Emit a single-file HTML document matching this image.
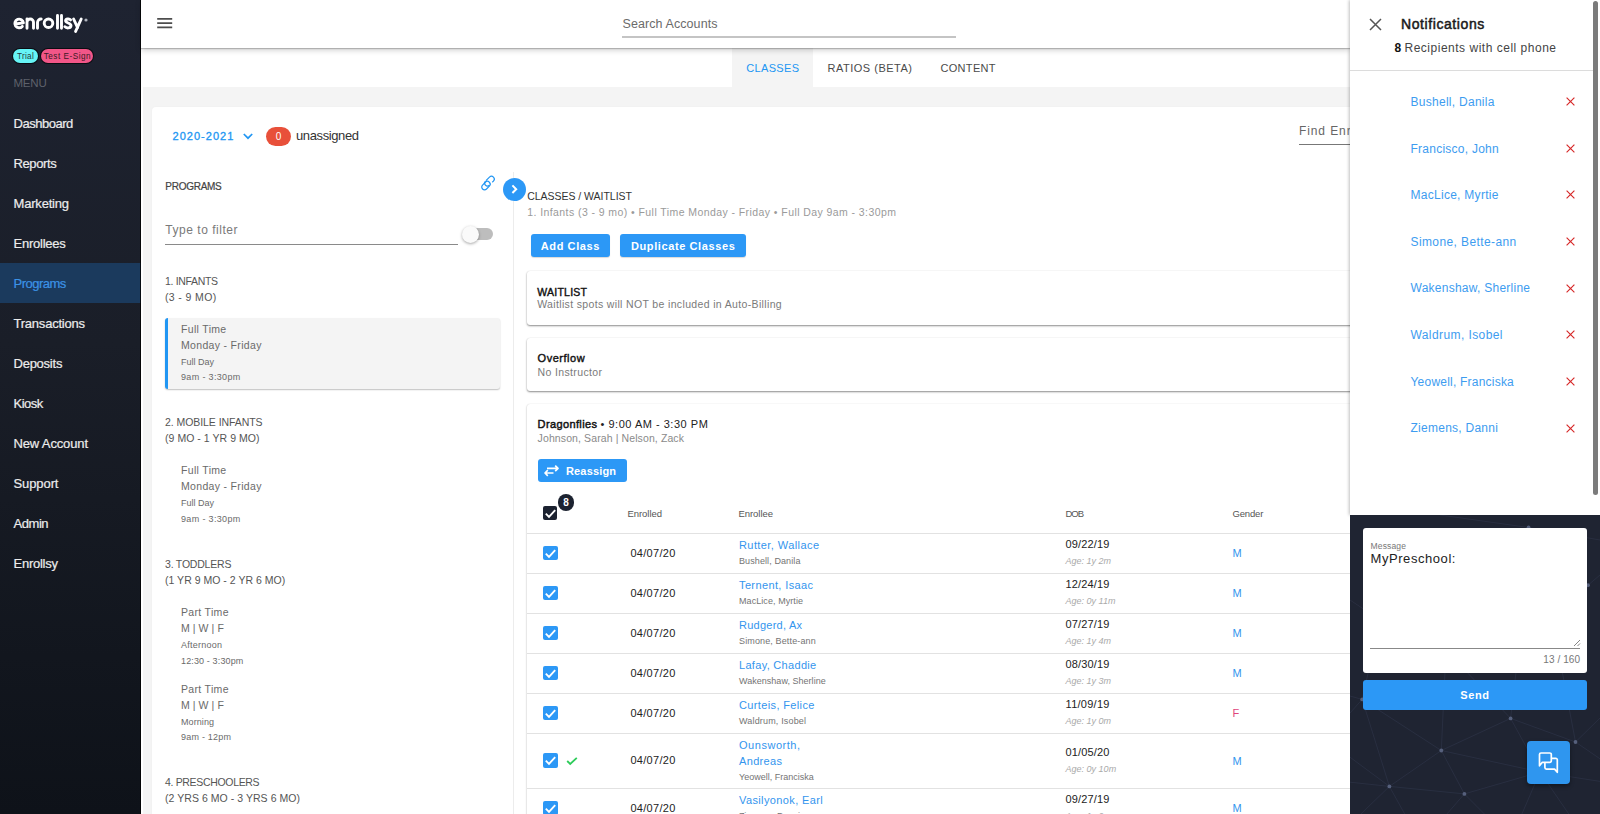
<!DOCTYPE html>
<html><head><meta charset="utf-8"><style>
*{box-sizing:border-box}
html,body{margin:0;padding:0}
body{width:1600px;height:814px;overflow:hidden;position:relative;background:#fff;font-family:"Liberation Sans", sans-serif;}
.t{position:absolute;white-space:nowrap;}
.a{position:absolute;}
</style></head><body>
<!-- sidebar -->
<div class="a" style="left:0;top:0;width:141px;height:814px;background:linear-gradient(180deg,#1e2331 0%,#1a1e28 42%,#0e1219 100%);"></div>
<div class="a" style="left:0;top:263px;width:141px;height:40px;background:#1b3a5d;"></div>
<!-- logo -->
<svg class="a" style="left:0;top:0" width="100" height="40" viewBox="0 0 100 40">
<g fill="none" stroke="#fff" stroke-width="2.9" stroke-linecap="round" stroke-linejoin="round">
<path d="M15.2 24.0 L23.4 22.9 A4.3 4.3 0 1 0 22.3 26.4"/>
<path d="M27 28.2 V22.3 A3.25 3.25 0 0 1 33.5 22.3 V28.2"/>
<path d="M27 18.9 V20" />
<path d="M37.5 28.2 V22.6 A3.6 3.6 0 0 1 41.2 19"/>
<circle cx="48.5" cy="23.25" r="4.3"/>
<path d="M57.5 15.4 V28.2 M61.5 15.4 V28.2"/>
<path d="M70.6 19.9 C69.6 18.6 65.6 18.4 65.6 20.8 C65.6 23.4 71 22.6 71 25.6 C71 28.6 66.2 28.4 64.9 26.7"/>
<path d="M73.6 19 L77.6 27.6 M81.2 19 L75.6 31.4"/>
</g>
<circle cx="86" cy="20" r="1.6" fill="#b0b4bd"/>
</svg>
<div class="a" style="left:13px;top:49px;width:24.5px;height:14px;border-radius:7px;background:#66f4f6;box-shadow:0 0 0 1px #0a0d12;"></div>
<div class="a" style="left:41.4px;top:49px;width:51.6px;height:14px;border-radius:7px;background:#f25688;box-shadow:0 0 0 1px #0a0d12;"></div>
<div class="t" style="left:13.3px;width:24.5px;text-align:center;top:50.8px;font-size:8.2px;line-height:11px;color:#26393d;letter-spacing:0.25px">Trial</div>
<div class="t" style="left:41.6px;width:51.6px;text-align:center;top:50.8px;font-size:8.2px;line-height:11px;color:#3b1a26;letter-spacing:0.5px">Test E-Sign</div>

<!-- content bg -->
<div class="a" style="left:143px;top:87px;width:1207px;height:727px;background:#f4f4f4;"></div>
<!-- tab bar -->
<div class="a" style="left:732px;top:48px;width:81px;height:39px;background:#f4f4f4;"></div>
<!-- header -->
<div class="a" style="left:141px;top:0;width:1209px;height:48px;background:#fff;box-shadow:0 1px 1px rgba(0,0,0,0.2),0 2px 6px rgba(0,0,0,0.2);"></div>
<div class="a" style="left:140px;top:0;width:1.2px;height:814px;background:rgba(0,0,0,0.8);"></div>
<svg class="a" style="left:155px;top:15px" width="20" height="16" viewBox="0 0 20 16"><path d="M2.2 3.9 H17.2 M2.2 8.1 H17.2 M2.2 12.4 H17.2" stroke="#4d4d4d" stroke-width="1.7"/></svg>
<div class="a" style="left:622px;top:36px;width:334px;height:1.5px;background:#c4c4c4;"></div>

<!-- main card -->
<div class="a" style="left:152px;top:107px;width:1250px;height:760px;background:#fff;border-radius:4px;box-shadow:0 0 2px rgba(0,0,0,0.04);"></div>
<!-- unassigned badge -->
<div class="a" style="left:265.7px;top:127px;width:25.8px;height:19.4px;border-radius:10px;background:#e8503a;"></div>
<!-- chevron -->
<svg class="a" style="left:242px;top:132px" width="12" height="9" viewBox="0 0 12 9"><path d="M1.8 2 L6 6.2 L10.2 2" stroke="#2196f3" stroke-width="1.7" fill="none"/></svg>
<!-- find enrollee underline -->
<div class="a" style="left:1299px;top:143.5px;width:60px;height:1px;background:#777;"></div>
<!-- filter underline -->
<div class="a" style="left:165px;top:244px;width:293px;height:1px;background:#8a8a8a;"></div>
<!-- toggle -->
<div class="a" style="left:464px;top:228px;width:29px;height:12px;border-radius:6px;background:#bdbdbd;"></div>
<div class="a" style="left:461.5px;top:225.7px;width:17px;height:17px;border-radius:50%;background:#fafafa;box-shadow:0 1px 3px rgba(0,0,0,0.35);"></div>
<!-- link icon -->
<svg class="a" style="left:478.7px;top:174.4px" width="18" height="18" viewBox="0 0 18 18">
<g transform="rotate(-45 9 9)" stroke="#2196f3" stroke-width="1.2" fill="none">
<rect x="0.9" y="6.6" width="9.6" height="5.6" rx="2.8"/>
<path d="M9.2 5.9 H14.2 A2.8 2.8 0 0 1 14.2 11.5 H12.5 M8.4 11.5 A2.8 2.8 0 0 1 8.6 5.9"/>
</g></svg>
<!-- selected program card -->
<div class="a" style="left:165px;top:318px;width:335px;height:70.5px;background:#f4f4f4;border-radius:3px;border-left:3px solid #2196f3;box-shadow:0 1px 1.5px rgba(0,0,0,0.25);"></div>
<!-- vertical divider -->
<div class="a" style="left:513px;top:172px;width:1px;height:642px;background:#ececec;"></div>
<!-- expand circle -->
<div class="a" style="left:502.6px;top:177.8px;width:23px;height:23px;border-radius:50%;background:#2c98f6;"></div>
<svg class="a" style="left:502.6px;top:177.8px" width="23" height="23" viewBox="0 0 23 23"><path d="M9.4 7.4 L13.2 11.2 L9.4 15" stroke="#fff" stroke-width="2" fill="none"/></svg>
<!-- buttons -->
<div class="a" style="left:531px;top:234px;width:79px;height:23px;border-radius:3px;background:#2c98f6;box-shadow:0 1px 1px rgba(0,0,0,0.15)"></div>
<div class="a" style="left:620px;top:234px;width:126.3px;height:23px;border-radius:3px;background:#2c98f6;box-shadow:0 1px 1px rgba(0,0,0,0.15)"></div>
<!-- class cards -->
<div class="a" style="left:527.2px;top:270.5px;width:900px;height:54px;background:#fff;border-radius:3px;box-shadow:0 1px 2px rgba(0,0,0,0.45),0 0 1px rgba(0,0,0,0.12);"></div>
<div class="a" style="left:527.2px;top:337.5px;width:900px;height:53.5px;background:#fff;border-radius:3px;box-shadow:0 1px 2px rgba(0,0,0,0.45),0 0 1px rgba(0,0,0,0.12);"></div>
<div class="a" style="left:527.2px;top:403.7px;width:900px;height:500px;background:#fff;border-radius:3px;box-shadow:0 1px 2px rgba(0,0,0,0.3),0 0 1px rgba(0,0,0,0.15);"></div>
<!-- reassign -->
<div class="a" style="left:537.6px;top:459px;width:89.6px;height:23px;border-radius:3px;background:#2c98f6;"></div>
<svg class="a" style="left:540px;top:462px" width="20" height="16" viewBox="0 0 20 16" fill="none" stroke="#fff" stroke-width="1.7" stroke-linejoin="round">
<path d="M7 6.4 H18 M15.2 3.6 L18 6.4 L15.2 9.2"/><path d="M13.5 11 H5 M7.8 8.2 L5 11 L7.8 13.8"/></svg>
<!-- header checkbox -->
<div class="a" style="left:542.8px;top:505.8px;width:14.7px;height:14.7px;border-radius:2px;background:#1c2230;"></div>
<svg class="a" style="left:542.8px;top:505.8px" width="15" height="15" viewBox="0 0 15 15"><path d="M2.8 7.6 L6 10.8 L12.2 4.2" stroke="#fff" stroke-width="1.9" fill="none"/></svg>
<div class="a" style="left:557.7px;top:494px;width:16.5px;height:16.5px;border-radius:50%;background:#1c2230;"></div>
<!-- table rows borders -->
<div class="a" style="left:527.2px;top:533px;width:823px;height:1px;background:#e2e2e2;"></div>
<div class="a" style="left:527.2px;top:573px;width:823px;height:1px;background:#e2e2e2;"></div>
<div class="a" style="left:527.2px;top:613px;width:823px;height:1px;background:#e2e2e2;"></div>
<div class="a" style="left:527.2px;top:653px;width:823px;height:1px;background:#e2e2e2;"></div>
<div class="a" style="left:527.2px;top:693px;width:823px;height:1px;background:#e2e2e2;"></div>
<div class="a" style="left:527.2px;top:733px;width:823px;height:1px;background:#e2e2e2;"></div>
<div class="a" style="left:527.2px;top:788px;width:823px;height:1px;background:#e2e2e2;"></div>
<div class="a" style="left:543px;top:545.7px;width:14.6px;height:14.6px;border-radius:2px;background:#2c98f6;"></div>
<svg class="a" style="left:543px;top:545.7px" width="15" height="15" viewBox="0 0 15 15"><path d="M2.8 7.6 L6 10.8 L12.2 4.2" stroke="#fff" stroke-width="1.9" fill="none"/></svg>
<div class="a" style="left:543px;top:585.7px;width:14.6px;height:14.6px;border-radius:2px;background:#2c98f6;"></div>
<svg class="a" style="left:543px;top:585.7px" width="15" height="15" viewBox="0 0 15 15"><path d="M2.8 7.6 L6 10.8 L12.2 4.2" stroke="#fff" stroke-width="1.9" fill="none"/></svg>
<div class="a" style="left:543px;top:625.7px;width:14.6px;height:14.6px;border-radius:2px;background:#2c98f6;"></div>
<svg class="a" style="left:543px;top:625.7px" width="15" height="15" viewBox="0 0 15 15"><path d="M2.8 7.6 L6 10.8 L12.2 4.2" stroke="#fff" stroke-width="1.9" fill="none"/></svg>
<div class="a" style="left:543px;top:665.7px;width:14.6px;height:14.6px;border-radius:2px;background:#2c98f6;"></div>
<svg class="a" style="left:543px;top:665.7px" width="15" height="15" viewBox="0 0 15 15"><path d="M2.8 7.6 L6 10.8 L12.2 4.2" stroke="#fff" stroke-width="1.9" fill="none"/></svg>
<div class="a" style="left:543px;top:705.7px;width:14.6px;height:14.6px;border-radius:2px;background:#2c98f6;"></div>
<svg class="a" style="left:543px;top:705.7px" width="15" height="15" viewBox="0 0 15 15"><path d="M2.8 7.6 L6 10.8 L12.2 4.2" stroke="#fff" stroke-width="1.9" fill="none"/></svg>
<div class="a" style="left:543px;top:753.0px;width:14.6px;height:14.6px;border-radius:2px;background:#2c98f6;"></div>
<svg class="a" style="left:543px;top:753.0px" width="15" height="15" viewBox="0 0 15 15"><path d="M2.8 7.6 L6 10.8 L12.2 4.2" stroke="#fff" stroke-width="1.9" fill="none"/></svg>
<div class="a" style="left:543px;top:800.7px;width:14.6px;height:14.6px;border-radius:2px;background:#2c98f6;"></div>
<svg class="a" style="left:543px;top:800.7px" width="15" height="15" viewBox="0 0 15 15"><path d="M2.8 7.6 L6 10.8 L12.2 4.2" stroke="#fff" stroke-width="1.9" fill="none"/></svg>

<!-- green check -->
<svg class="a" style="left:566px;top:756px" width="12" height="10" viewBox="0 0 12 10"><path d="M1.2 5 L4.2 8 L10.8 1.8" stroke="#2ecc5a" stroke-width="1.8" fill="none"/></svg>

<!-- notifications panel -->
<div class="a" style="left:1350px;top:0;width:250px;height:515px;background:#fff;box-shadow:-1px 0 3px rgba(0,0,0,0.25);"></div>
<svg class="a" style="left:1368px;top:16.7px" width="15" height="15" viewBox="0 0 15 15"><path d="M2 2 L13 13 M13 2 L2 13" stroke="#555" stroke-width="1.5"/></svg>
<div class="a" style="left:1350px;top:70px;width:243px;height:1px;background:#dcdcdc;"></div>
<div class="a" style="left:1593px;top:1.3px;width:5.4px;height:494px;border-radius:3px;background:#7b7b7b;"></div>
<svg class="a" style="left:1566px;top:97.10px" width="9" height="9" viewBox="0 0 9 9"><path d="M0.6 0.6 L8.4 8.4 M8.4 0.6 L0.6 8.4" stroke="#d62828" stroke-width="1.15"/></svg>
<svg class="a" style="left:1566px;top:143.73px" width="9" height="9" viewBox="0 0 9 9"><path d="M0.6 0.6 L8.4 8.4 M8.4 0.6 L0.6 8.4" stroke="#d62828" stroke-width="1.15"/></svg>
<svg class="a" style="left:1566px;top:190.36px" width="9" height="9" viewBox="0 0 9 9"><path d="M0.6 0.6 L8.4 8.4 M8.4 0.6 L0.6 8.4" stroke="#d62828" stroke-width="1.15"/></svg>
<svg class="a" style="left:1566px;top:236.99px" width="9" height="9" viewBox="0 0 9 9"><path d="M0.6 0.6 L8.4 8.4 M8.4 0.6 L0.6 8.4" stroke="#d62828" stroke-width="1.15"/></svg>
<svg class="a" style="left:1566px;top:283.62px" width="9" height="9" viewBox="0 0 9 9"><path d="M0.6 0.6 L8.4 8.4 M8.4 0.6 L0.6 8.4" stroke="#d62828" stroke-width="1.15"/></svg>
<svg class="a" style="left:1566px;top:330.25px" width="9" height="9" viewBox="0 0 9 9"><path d="M0.6 0.6 L8.4 8.4 M8.4 0.6 L0.6 8.4" stroke="#d62828" stroke-width="1.15"/></svg>
<svg class="a" style="left:1566px;top:376.88px" width="9" height="9" viewBox="0 0 9 9"><path d="M0.6 0.6 L8.4 8.4 M8.4 0.6 L0.6 8.4" stroke="#d62828" stroke-width="1.15"/></svg>
<svg class="a" style="left:1566px;top:423.51px" width="9" height="9" viewBox="0 0 9 9"><path d="M0.6 0.6 L8.4 8.4 M8.4 0.6 L0.6 8.4" stroke="#d62828" stroke-width="1.15"/></svg>

<!-- dark panel -->
<div class="a" style="left:1350px;top:515px;width:250px;height:299px;background:#1f2432;overflow:hidden;">
<svg width="250" height="299" viewBox="1350 515 250 299" style="position:absolute;left:0;top:0">
<g stroke="#2a3043" stroke-width="0.85" fill="none">
<line x1="1510.6" y1="718.4" x2="1441.3" y2="750.5"/><line x1="1441.3" y1="750.5" x2="1389.4" y2="786.4"/><line x1="1441.3" y1="750.5" x2="1464.4" y2="793.9"/><line x1="1389.4" y1="786.4" x2="1464.4" y2="793.9"/><line x1="1510.6" y1="718.4" x2="1575.5" y2="742"/><line x1="1441.3" y1="750.5" x2="1362.2" y2="699.4"/><line x1="1389.4" y1="786.4" x2="1362.2" y2="699.4"/><line x1="1441.3" y1="750.5" x2="1540" y2="772"/><line x1="1464.4" y1="793.9" x2="1540" y2="772"/><line x1="1510.6" y1="718.4" x2="1540" y2="772"/><line x1="1441.3" y1="750.5" x2="1446" y2="650"/><line x1="1510.6" y1="718.4" x2="1518" y2="655"/><line x1="1510.6" y1="718.4" x2="1446" y2="650"/><line x1="1575.5" y1="742" x2="1560" y2="660"/><line x1="1518" y1="655" x2="1560" y2="660"/><line x1="1446" y1="650" x2="1380" y2="620"/><line x1="1362.2" y1="699.4" x2="1380" y2="620"/><line x1="1518" y1="655" x2="1528.6" y2="527.5"/><line x1="1528.6" y1="527.5" x2="1588" y2="585.2"/><line x1="1588" y1="585.2" x2="1560" y2="660"/><line x1="1446" y1="650" x2="1518" y2="655"/><line x1="1389.4" y1="786.4" x2="1350" y2="782.2"/><line x1="1389.4" y1="786.4" x2="1350" y2="757.2"/><line x1="1389.4" y1="786.4" x2="1360.9" y2="814"/><line x1="1389.4" y1="786.4" x2="1404.7" y2="814"/><line x1="1464.4" y1="793.9" x2="1446.9" y2="814"/><line x1="1464.4" y1="793.9" x2="1484.4" y2="814"/><line x1="1575.5" y1="742" x2="1600" y2="718"/><line x1="1575.5" y1="742" x2="1600" y2="758.8"/><line x1="1540" y1="772" x2="1600" y2="781.4"/><line x1="1540" y1="772" x2="1568.8" y2="814"/><line x1="1540" y1="772" x2="1521.9" y2="814"/><line x1="1362.2" y1="699.4" x2="1350" y2="696"/><line x1="1362.2" y1="699.4" x2="1350" y2="713"/><line x1="1528.6" y1="527.5" x2="1440" y2="515"/><line x1="1588" y1="585.2" x2="1600" y2="575"/><line x1="1380" y1="620" x2="1350" y2="600"/><line x1="1528.6" y1="527.5" x2="1600" y2="540"/>
</g>
<g fill="#56607c"><circle cx="1510.6" cy="718.4" r="1.9"/><circle cx="1441.3" cy="750.5" r="1.9"/><circle cx="1389.4" cy="786.4" r="1.9"/><circle cx="1464.4" cy="793.9" r="1.9"/><circle cx="1575.5" cy="742" r="1.9"/><circle cx="1362.2" cy="699.4" r="1.9"/><circle cx="1528.6" cy="527.5" r="1.9"/><circle cx="1588" cy="585.2" r="1.9"/></g></svg>
</div>
<div class="a" style="left:1363px;top:528px;width:224px;height:145px;background:#fff;border-radius:3px;"></div>
<div class="a" style="left:1370px;top:647.5px;width:210px;height:1px;background:#888;"></div>
<svg class="a" style="left:1572px;top:638px" width="9" height="9" viewBox="0 0 9 9"><path d="M8 2 L2 8 M8 5.5 L5.5 8" stroke="#777" stroke-width="0.9"/></svg>
<div class="a" style="left:1363px;top:680px;width:224px;height:30px;background:#2c98f6;border-radius:3px;"></div>
<div class="a" style="left:1527px;top:741px;width:43px;height:43px;background:#2f96ef;border-radius:4px;box-shadow:0 2px 4px rgba(0,0,0,0.4);"></div>
<svg class="a" style="left:1527px;top:741px" width="43" height="43" viewBox="0 0 43 43" fill="none" stroke="#fff" stroke-width="1.7" stroke-linejoin="round">
<path d="M15.3 21.3 H22.8 A1.5 1.5 0 0 0 24.3 19.8 V13.5 A1.5 1.5 0 0 0 22.8 12 H14 A1.5 1.5 0 0 0 12.5 13.5 V24.8 Z"/>
<path d="M24.3 17.3 H28.8 A1.5 1.5 0 0 1 30.3 18.8 V31.3 L27.6 28.1 H19.4 A1.5 1.5 0 0 1 17.9 26.6 V21.3"/>
</svg>

<div class="t" id="t0" style="left:13.50px;top:117.38px;font-size:13px;line-height:13px;color:#ececec;font-weight:400;-webkit-text-stroke:0.2px #ececec;letter-spacing:-0.476px;">Dashboard</div>
<div class="t" id="t1" style="left:13.50px;top:157.38px;font-size:13px;line-height:13px;color:#ececec;font-weight:400;-webkit-text-stroke:0.2px #ececec;letter-spacing:-0.372px;">Reports</div>
<div class="t" id="t2" style="left:13.50px;top:197.38px;font-size:13px;line-height:13px;color:#ececec;font-weight:400;-webkit-text-stroke:0.2px #ececec;letter-spacing:-0.185px;">Marketing</div>
<div class="t" id="t3" style="left:13.50px;top:237.38px;font-size:13px;line-height:13px;color:#ececec;font-weight:400;-webkit-text-stroke:0.2px #ececec;letter-spacing:-0.238px;">Enrollees</div>
<div class="t" id="t4" style="left:13.50px;top:277.38px;font-size:13px;line-height:13px;color:#3b92e6;font-weight:400;-webkit-text-stroke:0.2px #3b92e6;letter-spacing:-0.508px;">Programs</div>
<div class="t" id="t5" style="left:13.50px;top:317.38px;font-size:13px;line-height:13px;color:#ececec;font-weight:400;-webkit-text-stroke:0.2px #ececec;letter-spacing:-0.222px;">Transactions</div>
<div class="t" id="t6" style="left:13.50px;top:357.38px;font-size:13px;line-height:13px;color:#ececec;font-weight:400;-webkit-text-stroke:0.2px #ececec;letter-spacing:-0.242px;">Deposits</div>
<div class="t" id="t7" style="left:13.50px;top:397.38px;font-size:13px;line-height:13px;color:#ececec;font-weight:400;-webkit-text-stroke:0.2px #ececec;letter-spacing:-0.526px;">Kiosk</div>
<div class="t" id="t8" style="left:13.50px;top:437.38px;font-size:13px;line-height:13px;color:#ececec;font-weight:400;-webkit-text-stroke:0.2px #ececec;letter-spacing:-0.138px;">New Account</div>
<div class="t" id="t9" style="left:13.50px;top:477.38px;font-size:13px;line-height:13px;color:#ececec;font-weight:400;-webkit-text-stroke:0.2px #ececec;letter-spacing:-0.091px;">Support</div>
<div class="t" id="t10" style="left:13.50px;top:517.38px;font-size:13px;line-height:13px;color:#ececec;font-weight:400;-webkit-text-stroke:0.2px #ececec;letter-spacing:-0.440px;">Admin</div>
<div class="t" id="t11" style="left:13.50px;top:557.38px;font-size:13px;line-height:13px;color:#ececec;font-weight:400;-webkit-text-stroke:0.2px #ececec;letter-spacing:-0.250px;">Enrollsy</div>
<div class="t" id="t12" style="left:13.50px;top:78.14px;font-size:11.5px;line-height:11.5px;color:#5d616b;font-weight:400;letter-spacing:-0.221px;">MENU</div>
<div class="t" id="t13" style="left:622.50px;top:17.50px;font-size:12.5px;line-height:12.5px;color:#6b6b6b;font-weight:400;letter-spacing:0.084px;">Search Accounts</div>
<div class="t" id="t14" style="left:746.25px;top:62.51px;font-size:11px;line-height:11px;color:#2196f3;font-weight:400;letter-spacing:0.331px;">CLASSES</div>
<div class="t" id="t15" style="left:827.50px;top:62.51px;font-size:11px;line-height:11px;color:#4a4a4a;font-weight:400;letter-spacing:0.505px;">RATIOS (BETA)</div>
<div class="t" id="t16" style="left:940.50px;top:62.51px;font-size:11px;line-height:11px;color:#4a4a4a;font-weight:400;letter-spacing:0.304px;">CONTENT</div>
<div class="t" id="t17" style="left:172.50px;top:131.26px;font-size:11px;line-height:11px;color:#2196f3;font-weight:400;-webkit-text-stroke:0.3px #2196f3;letter-spacing:1.024px;">2020-2021</div>
<div class="t" id="t18" style="left:296.00px;top:128.68px;font-size:13px;line-height:13px;color:#333;font-weight:400;letter-spacing:-0.389px;">unassigned</div>
<div class="t" id="t19" style="left:78.50px;width:400px;text-align:center;top:131.60px;font-size:10px;line-height:10px;color:#fff;font-weight:400;">0</div>
<div class="t" id="t20" style="left:1299.00px;top:124.92px;font-size:12px;line-height:12px;color:#666;font-weight:400;width:51px;overflow:hidden;letter-spacing:0.9px;">Find Enrollee</div>
<div class="t" id="t21" style="left:165.30px;top:181.90px;font-size:10px;line-height:10px;color:#444;font-weight:400;-webkit-text-stroke:0.2px #444;letter-spacing:-0.264px;">PROGRAMS</div>
<div class="t" id="t22" style="left:165.30px;top:223.92px;font-size:12px;line-height:12px;color:#7a7a7a;font-weight:400;letter-spacing:0.525px;">Type to filter</div>
<div class="t" id="t23" style="left:165.00px;top:275.58px;font-size:10.5px;line-height:10.5px;color:#555;font-weight:400;letter-spacing:-0.335px;">1. INFANTS</div>
<div class="t" id="t24" style="left:165.00px;top:291.58px;font-size:10.5px;line-height:10.5px;color:#555;font-weight:400;letter-spacing:0.373px;">(3 - 9 MO)</div>
<div class="t" id="t25" style="left:181.00px;top:323.78px;font-size:10.5px;line-height:10.5px;color:#6a6a6a;font-weight:400;letter-spacing:0.326px;">Full Time</div>
<div class="t" id="t26" style="left:181.00px;top:339.78px;font-size:10.5px;line-height:10.5px;color:#6a6a6a;font-weight:400;letter-spacing:0.324px;">Monday - Friday</div>
<div class="t" id="t27" style="left:181.00px;top:357.54px;font-size:9px;line-height:9px;color:#6a6a6a;font-weight:400;letter-spacing:-0.002px;">Full Day</div>
<div class="t" id="t28" style="left:181.00px;top:373.34px;font-size:9px;line-height:9px;color:#6a6a6a;font-weight:400;letter-spacing:0.342px;">9am - 3:30pm</div>
<div class="t" id="t29" style="left:165.00px;top:417.28px;font-size:10.5px;line-height:10.5px;color:#555;font-weight:400;letter-spacing:-0.064px;">2. MOBILE INFANTS</div>
<div class="t" id="t30" style="left:165.00px;top:433.28px;font-size:10.5px;line-height:10.5px;color:#555;font-weight:400;letter-spacing:0.045px;">(9 MO - 1 YR 9 MO)</div>
<div class="t" id="t31" style="left:181.00px;top:465.18px;font-size:10.5px;line-height:10.5px;color:#6a6a6a;font-weight:400;letter-spacing:0.326px;">Full Time</div>
<div class="t" id="t32" style="left:181.00px;top:481.18px;font-size:10.5px;line-height:10.5px;color:#6a6a6a;font-weight:400;letter-spacing:0.324px;">Monday - Friday</div>
<div class="t" id="t33" style="left:181.00px;top:498.94px;font-size:9px;line-height:9px;color:#6a6a6a;font-weight:400;letter-spacing:-0.002px;">Full Day</div>
<div class="t" id="t34" style="left:181.00px;top:514.74px;font-size:9px;line-height:9px;color:#6a6a6a;font-weight:400;letter-spacing:0.342px;">9am - 3:30pm</div>
<div class="t" id="t35" style="left:165.00px;top:559.18px;font-size:10.5px;line-height:10.5px;color:#555;font-weight:400;letter-spacing:-0.208px;">3. TODDLERS</div>
<div class="t" id="t36" style="left:165.00px;top:575.18px;font-size:10.5px;line-height:10.5px;color:#555;font-weight:400;letter-spacing:0.018px;">(1 YR 9 MO - 2 YR 6 MO)</div>
<div class="t" id="t37" style="left:181.00px;top:607.28px;font-size:10.5px;line-height:10.5px;color:#6a6a6a;font-weight:400;letter-spacing:0.320px;">Part Time</div>
<div class="t" id="t38" style="left:181.00px;top:623.28px;font-size:10.5px;line-height:10.5px;color:#6a6a6a;font-weight:400;letter-spacing:0.075px;">M | W | F</div>
<div class="t" id="t39" style="left:181.00px;top:641.04px;font-size:9px;line-height:9px;color:#6a6a6a;font-weight:400;letter-spacing:0.246px;">Afternoon</div>
<div class="t" id="t40" style="left:181.00px;top:656.84px;font-size:9px;line-height:9px;color:#6a6a6a;font-weight:400;letter-spacing:0.135px;">12:30 - 3:30pm</div>
<div class="t" id="t41" style="left:181.00px;top:683.88px;font-size:10.5px;line-height:10.5px;color:#6a6a6a;font-weight:400;letter-spacing:0.320px;">Part Time</div>
<div class="t" id="t42" style="left:181.00px;top:699.88px;font-size:10.5px;line-height:10.5px;color:#6a6a6a;font-weight:400;letter-spacing:0.075px;">M | W | F</div>
<div class="t" id="t43" style="left:181.00px;top:717.64px;font-size:9px;line-height:9px;color:#6a6a6a;font-weight:400;letter-spacing:0.079px;">Morning</div>
<div class="t" id="t44" style="left:181.00px;top:733.44px;font-size:9px;line-height:9px;color:#6a6a6a;font-weight:400;letter-spacing:0.219px;">9am - 12pm</div>
<div class="t" id="t45" style="left:165.00px;top:777.48px;font-size:10.5px;line-height:10.5px;color:#555;font-weight:400;letter-spacing:-0.329px;">4. PRESCHOOLERS</div>
<div class="t" id="t46" style="left:165.00px;top:793.48px;font-size:10.5px;line-height:10.5px;color:#555;font-weight:400;letter-spacing:0.049px;">(2 YRS 6 MO - 3 YRS 6 MO)</div>
<div class="t" id="t47" style="left:527.20px;top:191.38px;font-size:10.5px;line-height:10.5px;color:#333;font-weight:400;letter-spacing:-0.026px;">CLASSES / WAITLIST</div>
<div class="t" id="t48" style="left:527.20px;top:207.28px;font-size:10.5px;line-height:10.5px;color:#9a9a9a;font-weight:400;letter-spacing:0.425px;">1. Infants (3 - 9 mo) • Full Time Monday - Friday • Full Day 9am - 3:30pm</div>
<div class="t" id="t49" style="left:370.40px;width:400px;text-align:center;top:240.76px;font-size:11px;line-height:11px;color:#fff;font-weight:700;letter-spacing:0.6px;">Add Class</div>
<div class="t" id="t50" style="left:483.20px;width:400px;text-align:center;top:240.76px;font-size:11px;line-height:11px;color:#fff;font-weight:700;letter-spacing:0.6px;">Duplicate Classes</div>
<div class="t" id="t51" style="left:537.20px;top:286.58px;font-size:10.5px;line-height:10.5px;color:#111;font-weight:400;-webkit-text-stroke:0.4px #111;letter-spacing:0.252px;">WAITLIST</div>
<div class="t" id="t52" style="left:537.20px;top:299.18px;font-size:10.5px;line-height:10.5px;color:#7a7a7a;font-weight:400;letter-spacing:0.350px;">Waitlist spots will NOT be included in Auto-Billing</div>
<div class="t" id="t53" style="left:537.60px;top:352.66px;font-size:11px;line-height:11px;color:#111;font-weight:400;-webkit-text-stroke:0.4px #111;letter-spacing:0.513px;">Overflow</div>
<div class="t" id="t54" style="left:537.60px;top:366.58px;font-size:10.5px;line-height:10.5px;color:#7a7a7a;font-weight:400;letter-spacing:0.358px;">No Instructor</div>
<div class="t" id="t55" style="left:537.60px;top:418.96px;font-size:11px;line-height:11px;color:#111;font-weight:400;-webkit-text-stroke:0.45px #111;letter-spacing:0.376px;">Dragonflies</div>
<div class="t" id="t56" style="left:600.50px;top:418.96px;font-size:11px;line-height:11px;color:#222;font-weight:400;letter-spacing:0.516px;">• 9:00 AM - 3:30 PM</div>
<div class="t" id="t57" style="left:537.60px;top:432.88px;font-size:10.5px;line-height:10.5px;color:#8a8a8a;font-weight:400;letter-spacing:0.107px;">Johnson, Sarah | Nelson, Zack</div>
<div class="t" id="t58" style="left:566.00px;top:466.26px;font-size:11px;line-height:11px;color:#fff;font-weight:700;letter-spacing:0.154px;">Reassign</div>
<div class="t" id="t59" style="left:366.00px;width:400px;text-align:center;top:497.90px;font-size:10px;line-height:10px;color:#fff;font-weight:700;">8</div>
<div class="t" id="t60" style="left:627.50px;top:509.02px;font-size:9.5px;line-height:9.5px;color:#555;font-weight:400;letter-spacing:-0.053px;">Enrolled</div>
<div class="t" id="t61" style="left:738.50px;top:509.02px;font-size:9.5px;line-height:9.5px;color:#555;font-weight:400;letter-spacing:-0.053px;">Enrollee</div>
<div class="t" id="t62" style="left:1065.60px;top:509.02px;font-size:9.5px;line-height:9.5px;color:#555;font-weight:400;letter-spacing:-0.3px;letter-spacing:-1.094px;">DOB</div>
<div class="t" id="t63" style="left:1232.40px;top:509.02px;font-size:9.5px;line-height:9.5px;color:#555;font-weight:400;letter-spacing:-0.139px;">Gender</div>
<div class="t" id="t64" style="left:630.40px;top:547.76px;font-size:11px;line-height:11px;color:#222;font-weight:400;letter-spacing:0.310px;">04/07/20</div>
<div class="t" id="t65" style="left:739.00px;top:539.76px;font-size:11px;line-height:11px;color:#3395ee;font-weight:400;letter-spacing:0.416px;">Rutter, Wallace</div>
<div class="t" id="t66" style="left:739.00px;top:557.44px;font-size:9px;line-height:9px;color:#747474;font-weight:400;letter-spacing:0.097px;">Bushell, Danila</div>
<div class="t" id="t67" style="left:1065.60px;top:539.36px;font-size:11px;line-height:11px;color:#222;font-weight:400;letter-spacing:0.139px;">09/22/19</div>
<div class="t" id="t68" style="left:1065.60px;top:557.44px;font-size:9px;line-height:9px;color:#aaa;font-weight:400;font-style:italic;">Age: 1y 2m</div>
<div class="t" id="t69" style="left:1232.40px;top:547.76px;font-size:11px;line-height:11px;color:#3395ee;font-weight:400;">M</div>
<div class="t" id="t70" style="left:630.40px;top:587.76px;font-size:11px;line-height:11px;color:#222;font-weight:400;letter-spacing:0.310px;">04/07/20</div>
<div class="t" id="t71" style="left:739.00px;top:579.76px;font-size:11px;line-height:11px;color:#3395ee;font-weight:400;letter-spacing:0.377px;">Ternent, Isaac</div>
<div class="t" id="t72" style="left:739.00px;top:597.44px;font-size:9px;line-height:9px;color:#747474;font-weight:400;letter-spacing:0.069px;">MacLice, Myrtie</div>
<div class="t" id="t73" style="left:1065.60px;top:579.36px;font-size:11px;line-height:11px;color:#222;font-weight:400;letter-spacing:0.139px;">12/24/19</div>
<div class="t" id="t74" style="left:1065.60px;top:597.44px;font-size:9px;line-height:9px;color:#aaa;font-weight:400;font-style:italic;">Age: 0y 11m</div>
<div class="t" id="t75" style="left:1232.40px;top:587.76px;font-size:11px;line-height:11px;color:#3395ee;font-weight:400;">M</div>
<div class="t" id="t76" style="left:630.40px;top:627.76px;font-size:11px;line-height:11px;color:#222;font-weight:400;letter-spacing:0.310px;">04/07/20</div>
<div class="t" id="t77" style="left:739.00px;top:619.76px;font-size:11px;line-height:11px;color:#3395ee;font-weight:400;letter-spacing:0.246px;">Rudgerd, Ax</div>
<div class="t" id="t78" style="left:739.00px;top:637.44px;font-size:9px;line-height:9px;color:#747474;font-weight:400;letter-spacing:0.134px;">Simone, Bette-ann</div>
<div class="t" id="t79" style="left:1065.60px;top:619.36px;font-size:11px;line-height:11px;color:#222;font-weight:400;letter-spacing:0.139px;">07/27/19</div>
<div class="t" id="t80" style="left:1065.60px;top:637.44px;font-size:9px;line-height:9px;color:#aaa;font-weight:400;font-style:italic;">Age: 1y 4m</div>
<div class="t" id="t81" style="left:1232.40px;top:627.76px;font-size:11px;line-height:11px;color:#3395ee;font-weight:400;">M</div>
<div class="t" id="t82" style="left:630.40px;top:667.76px;font-size:11px;line-height:11px;color:#222;font-weight:400;letter-spacing:0.310px;">04/07/20</div>
<div class="t" id="t83" style="left:739.00px;top:659.76px;font-size:11px;line-height:11px;color:#3395ee;font-weight:400;letter-spacing:0.309px;">Lafay, Chaddie</div>
<div class="t" id="t84" style="left:739.00px;top:677.44px;font-size:9px;line-height:9px;color:#747474;font-weight:400;letter-spacing:0.027px;">Wakenshaw, Sherline</div>
<div class="t" id="t85" style="left:1065.60px;top:659.36px;font-size:11px;line-height:11px;color:#222;font-weight:400;letter-spacing:0.139px;">08/30/19</div>
<div class="t" id="t86" style="left:1065.60px;top:677.44px;font-size:9px;line-height:9px;color:#aaa;font-weight:400;font-style:italic;">Age: 1y 3m</div>
<div class="t" id="t87" style="left:1232.40px;top:667.76px;font-size:11px;line-height:11px;color:#3395ee;font-weight:400;">M</div>
<div class="t" id="t88" style="left:630.40px;top:707.76px;font-size:11px;line-height:11px;color:#222;font-weight:400;letter-spacing:0.310px;">04/07/20</div>
<div class="t" id="t89" style="left:739.00px;top:699.76px;font-size:11px;line-height:11px;color:#3395ee;font-weight:400;letter-spacing:0.364px;">Curteis, Felice</div>
<div class="t" id="t90" style="left:739.00px;top:717.44px;font-size:9px;line-height:9px;color:#747474;font-weight:400;letter-spacing:0.165px;">Waldrum, Isobel</div>
<div class="t" id="t91" style="left:1065.60px;top:699.36px;font-size:11px;line-height:11px;color:#222;font-weight:400;letter-spacing:0.255px;">11/09/19</div>
<div class="t" id="t92" style="left:1065.60px;top:717.44px;font-size:9px;line-height:9px;color:#aaa;font-weight:400;font-style:italic;">Age: 1y 0m</div>
<div class="t" id="t93" style="left:1232.40px;top:707.76px;font-size:11px;line-height:11px;color:#e0457b;font-weight:400;">F</div>
<div class="t" id="t94" style="left:630.40px;top:755.26px;font-size:11px;line-height:11px;color:#222;font-weight:400;letter-spacing:0.310px;">04/07/20</div>
<div class="t" id="t95" style="left:739.00px;top:740.16px;font-size:11px;line-height:11px;color:#3395ee;font-weight:400;letter-spacing:0.528px;">Ounsworth,</div>
<div class="t" id="t96" style="left:739.00px;top:755.76px;font-size:11px;line-height:11px;color:#3395ee;font-weight:400;letter-spacing:0.336px;">Andreas</div>
<div class="t" id="t97" style="left:739.00px;top:773.44px;font-size:9px;line-height:9px;color:#747474;font-weight:400;letter-spacing:0.006px;">Yeowell, Franciska</div>
<div class="t" id="t98" style="left:1065.60px;top:746.56px;font-size:11px;line-height:11px;color:#222;font-weight:400;letter-spacing:0.139px;">01/05/20</div>
<div class="t" id="t99" style="left:1065.60px;top:764.84px;font-size:9px;line-height:9px;color:#aaa;font-weight:400;font-style:italic;">Age: 0y 10m</div>
<div class="t" id="t100" style="left:1232.40px;top:755.76px;font-size:11px;line-height:11px;color:#3395ee;font-weight:400;">M</div>
<div class="t" id="t101" style="left:630.40px;top:802.76px;font-size:11px;line-height:11px;color:#222;font-weight:400;letter-spacing:0.310px;">04/07/20</div>
<div class="t" id="t102" style="left:739.00px;top:794.76px;font-size:11px;line-height:11px;color:#3395ee;font-weight:400;letter-spacing:0.383px;">Vasilyonok, Earl</div>
<div class="t" id="t103" style="left:739.00px;top:812.44px;font-size:9px;line-height:9px;color:#747474;font-weight:400;letter-spacing:-0.156px;">Ziemens, Danni</div>
<div class="t" id="t104" style="left:1065.60px;top:794.36px;font-size:11px;line-height:11px;color:#222;font-weight:400;letter-spacing:0.139px;">09/27/19</div>
<div class="t" id="t105" style="left:1065.60px;top:812.44px;font-size:9px;line-height:9px;color:#aaa;font-weight:400;font-style:italic;">Age: 1y 2m</div>
<div class="t" id="t106" style="left:1232.40px;top:802.76px;font-size:11px;line-height:11px;color:#3395ee;font-weight:400;">M</div>
<div class="t" id="t107" style="left:1401.00px;top:17.04px;font-size:14px;line-height:14px;color:#1a1a1a;font-weight:400;-webkit-text-stroke:0.5px #1a1a1a;letter-spacing:0.586px;">Notifications</div>
<div class="t" id="t108" style="left:1394.40px;top:41.92px;font-size:12px;line-height:12px;color:#111;font-weight:700;">8</div>
<div class="t" id="t109" style="left:1404.50px;top:41.92px;font-size:12px;line-height:12px;color:#444;font-weight:400;letter-spacing:0.510px;">Recipients with cell phone</div>
<div class="t" id="t110" style="left:1410.50px;top:95.92px;font-size:12px;line-height:12px;color:#3d9cf0;font-weight:400;letter-spacing:0.275px;">Bushell, Danila</div>
<div class="t" id="t111" style="left:1410.50px;top:142.55px;font-size:12px;line-height:12px;color:#3d9cf0;font-weight:400;letter-spacing:0.250px;">Francisco, John</div>
<div class="t" id="t112" style="left:1410.50px;top:189.18px;font-size:12px;line-height:12px;color:#3d9cf0;font-weight:400;letter-spacing:0.276px;">MacLice, Myrtie</div>
<div class="t" id="t113" style="left:1410.50px;top:235.81px;font-size:12px;line-height:12px;color:#3d9cf0;font-weight:400;letter-spacing:0.400px;">Simone, Bette-ann</div>
<div class="t" id="t114" style="left:1410.50px;top:282.44px;font-size:12px;line-height:12px;color:#3d9cf0;font-weight:400;letter-spacing:0.252px;">Wakenshaw, Sherline</div>
<div class="t" id="t115" style="left:1410.50px;top:329.07px;font-size:12px;line-height:12px;color:#3d9cf0;font-weight:400;letter-spacing:0.410px;">Waldrum, Isobel</div>
<div class="t" id="t116" style="left:1410.50px;top:375.70px;font-size:12px;line-height:12px;color:#3d9cf0;font-weight:400;letter-spacing:0.217px;">Yeowell, Franciska</div>
<div class="t" id="t117" style="left:1410.50px;top:422.33px;font-size:12px;line-height:12px;color:#3d9cf0;font-weight:400;letter-spacing:0.258px;">Ziemens, Danni</div>
<div class="t" id="t118" style="left:1370.50px;top:541.86px;font-size:8.5px;line-height:8.5px;color:#777;font-weight:400;letter-spacing:0.166px;">Message</div>
<div class="t" id="t119" style="left:1370.50px;top:551.58px;font-size:13px;line-height:13px;color:#222;font-weight:400;letter-spacing:0.567px;">MyPreschool:</div>
<div class="t" id="t120" style="left:1543.30px;top:655.00px;font-size:10px;line-height:10px;color:#777;font-weight:400;letter-spacing:0.078px;">13 / 160</div>
<div class="t" id="t121" style="left:1275.00px;width:400px;text-align:center;top:689.76px;font-size:11px;line-height:11px;color:#fff;font-weight:700;letter-spacing:0.6px;">Send</div>
</body></html>
